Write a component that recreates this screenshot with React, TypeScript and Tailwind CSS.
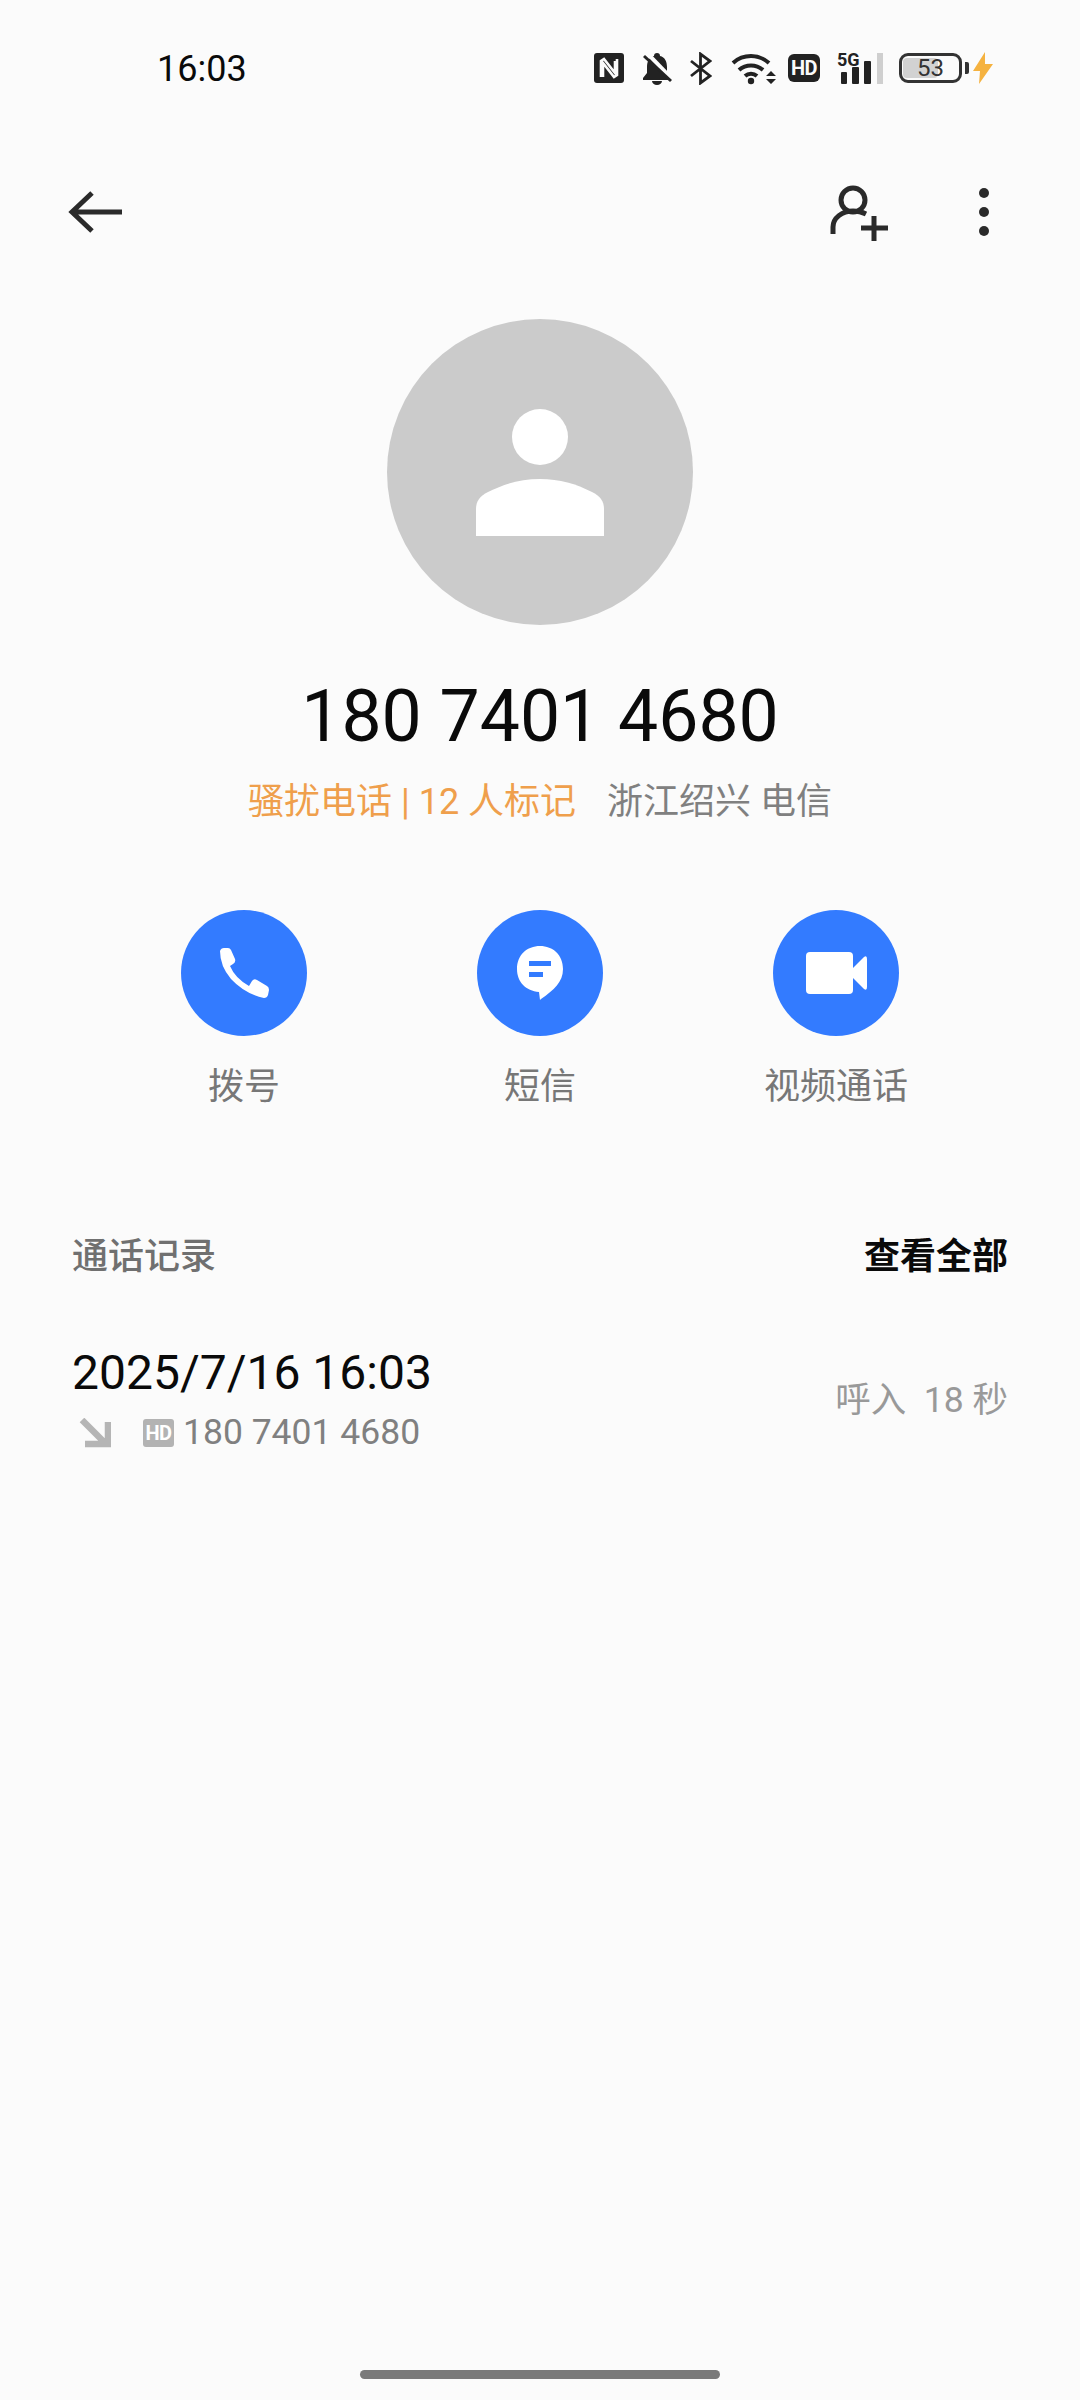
const fontStack = "font-['Roboto','Noto_Sans_CJK_SC',sans-serif]";

function StatusIcons() {
  return (
    <div className="flex items-center">
      {/* nfc */}
      <svg width="30" height="32" viewBox="0 0 30 32">
        <rect x="0" y="1" width="30" height="30" rx="3" fill="#222" />
        <path d="M7 25V9l3-2 11 14V9M23 7v16l-3 2L9 11v14" fill="none" stroke="#fbfbfb" strokeWidth="2.600" />
      </svg>
      {/* muted bell */}
      <svg className="ml-[18px]" width="30" height="33" viewBox="0 0 30 33">
        <path d="M15 1a3 3 0 0 1 3 3c5 1 7 6 7 11v6l4 5v2H1v-2l4-5v-6c0-5 2-10 7-11a3 3 0 0 1 3-3z" fill="#222" />
        <path d="M10 29h10a5 4 0 0 1-10 0z" fill="#222" />
        <path d="M5 1l26 27" stroke="#fbfbfb" strokeWidth="4" />
        <path d="M2 4l27 25" stroke="#222" strokeWidth="3" />
      </svg>
      {/* bluetooth */}
      <svg className="ml-[18px]" width="22" height="33" viewBox="0 0 22 33">
        <path d="M1 9l19 15-9.500 7V2L20 9 1 24" fill="none" stroke="#222" strokeWidth="2.800" />
      </svg>
      {/* wifi */}
      <svg className="ml-[19px]" width="45" height="33" viewBox="0 0 45 33">
        <path d="M2 11a27 27 0 0 1 36 0" fill="none" stroke="#222" strokeWidth="4" />
        <path d="M8 18a18 18 0 0 1 24 0" fill="none" stroke="#222" strokeWidth="4" />
        <path d="M14 24a9 9 0 0 1 12 0" fill="none" stroke="#222" strokeWidth="4" />
        <circle cx="20" cy="29" r="3.200" fill="#222" />
        <path d="M35 24l5-5 5 5zM35 27h10l-5 5z" fill="#222" />
      </svg>
      <div className="ml-[12px] flex h-[28px] w-[32px] items-center justify-center rounded-[6px] bg-[#222] font-['Roboto',sans-serif] text-[20px] font-bold tracking-[-0.5px] text-[#fbfbfb]">
        HD
      </div>
      {/* 5g + signal */}
      <svg className="ml-[17px] overflow-visible" width="46" height="33" viewBox="0 0 46 33">
        <text x="0" y="14" fontFamily="Roboto" fontSize="18" fontWeight="700" fill="#222">
          5G
        </text>
        <rect x="4" y="20" width="6" height="12" rx="1" fill="#222" />
        <rect x="15" y="15" width="7" height="17" rx="1" fill="#222" />
        <rect x="27" y="9" width="7" height="23" rx="1" fill="#222" />
        <rect x="40" y="1" width="6" height="31" fill="#cfcfcf" />
      </svg>
      {/* battery */}
      <div className="relative ml-[16px] flex h-[30px] w-[63px] items-center justify-center rounded-[9px] border-[3px] border-[#333] font-['Roboto',sans-serif] text-[24px] text-[#333]">
        <span className="absolute top-[2px] bottom-[2px] left-[1px] w-[35px] rounded-[4px] bg-[#d2d2d2]" />
        <span className="relative leading-none">53</span>
      </div>
      <div className="ml-[3px] h-[12px] w-[4px] rounded-r-[2px] bg-[#333]" />
      <svg className="ml-[4px]" width="20" height="32" viewBox="0 0 20 32">
        <path d="M12 0L0 19h7l-1 13 14-20h-8z" fill="#f5b240" />
      </svg>
    </div>
  );
}

function PhoneIcon() {
  return (
    <svg width="52" height="50" viewBox="0 0 52 50">
      <path
        d="M2 3 Q3 0 6 0 L10 0 Q12 0 13 2 L17 11 Q18 14 15 16 L12 18 Q17 30 31 38 L34 33 Q36 30 39 32 L49 38 Q51 39 51 42 L50 47 Q49 50 46 50 Q27 46 13 31 Q2 18 2 3 Z"
        fill="#fff"
      />
    </svg>
  );
}

function MessageIcon() {
  return (
    <svg width="46" height="54" viewBox="0 0 46 54">
      <path d="M23 0C36 0 46 9 46 23C46 36 37 44 24 53L23 54L22 46C9 45 0 36 0 23C0 9 10 0 23 0Z" fill="#fff" />
      <rect x="12" y="15" width="22" height="5" fill="#337bff" />
      <rect x="12" y="26" width="14" height="5" fill="#337bff" />
    </svg>
  );
}

function VideoIcon() {
  return (
    <svg width="61" height="42" viewBox="0 0 61 42">
      <rect x="0" y="0" width="47" height="42" rx="4" fill="#fff" />
      <path d="M47 16L58 5Q61 3 61 7V35Q61 39 58 37L47 26Z" fill="#fff" />
    </svg>
  );
}

const actions = [
  { label: "拨号", icon: <PhoneIcon /> },
  { label: "短信", icon: <MessageIcon /> },
  { label: "视频通话", icon: <VideoIcon /> },
];

export default function App() {
  return (
    <div className={`flex h-[2400px] w-[1080px] flex-col bg-[#fbfbfb] ${fontStack}`}>
      <div className="flex h-[136px] items-center justify-between pr-[87px] pl-[157px]">
        <span className="pt-[2px] text-[36px] leading-none font-[450] text-[#0a0a0a]">16:03</span>
        <StatusIcons />
      </div>

      <div className="mt-[26px] flex h-[100px] items-center justify-between pr-[91px] pl-[68px]">
        <svg width="56" height="44" viewBox="0 0 56 44">
          <path d="M24 3L4 22L24 41M4 22H54" fill="none" stroke="#2a2a2a" strokeWidth="5" />
        </svg>
        <div className="flex items-center">
          <svg width="62" height="58" viewBox="0 0 62 58">
            <circle cx="23" cy="17" r="12" fill="none" stroke="#2a2a2a" strokeWidth="5" />
            <path d="M3 51V44C3 35 12 28 23 28C28 28 32 29 36 31" fill="none" stroke="#2a2a2a" strokeWidth="5" />
            <path d="M44 33V58M31 45H58" fill="none" stroke="#2a2a2a" strokeWidth="5" />
          </svg>
          <svg className="ml-[87px]" width="10" height="48" viewBox="0 0 10 48">
            <circle cx="5" cy="5" r="5" fill="#2a2a2a" />
            <circle cx="5" cy="24" r="5" fill="#2a2a2a" />
            <circle cx="5" cy="43" r="5" fill="#2a2a2a" />
          </svg>
        </div>
      </div>

      <div className="mt-[57px] flex flex-col items-center">
        <div className="flex h-[306px] w-[306px] flex-col items-center justify-center rounded-full bg-[#cbcbcb]">
          <div className="h-[56px] w-[56px] rounded-full bg-white" />
          <svg className="mt-[14px]" width="128" height="57" viewBox="0 0 128 57">
            <path d="M0 57V30C0 22 4 17 12 13C28 5 44 0 64 0C84 0 100 5 116 13C124 17 128 22 128 30V57Z" fill="#fff" />
          </svg>
        </div>
        <div className="mt-[50px] text-[71.5px] leading-[84px] text-[#0a0a0a]">180 7401 4680</div>
        <div className="mt-[18px] flex text-[36px] leading-[50px]">
          <span className="text-[#ef9f4c]">骚扰电话 | 12 人标记</span>
          <span className="ml-[31px] text-[#808080]">浙江绍兴 电信</span>
        </div>
      </div>

      <div className="mt-[83px] grid grid-cols-[repeat(3,296px)] pl-[96px]">
        {actions.map((action) => (
          <div key={action.label} className="flex flex-col items-center">
            <div className="flex h-[126px] w-[126px] items-center justify-center rounded-full bg-[#337bff]">
              {action.icon}
            </div>
            <span className="mt-[26px] text-[36px] leading-[50px] text-[#777]">{action.label}</span>
          </div>
        ))}
      </div>

      <div className="mt-[120px] flex items-center justify-between px-[72px] text-[36px] leading-[50px]">
        <span className="font-medium text-[#707070]">通话记录</span>
        <span className="font-bold text-[#0a0a0a]">查看全部</span>
      </div>

      <div className="mt-[61px] flex items-center justify-between px-[72px]">
        <div className="flex flex-col">
          <span className="text-[48px] leading-[60px] text-[#0a0a0a]">2025/7/16 16:03</span>
          <div className="mt-[8px] flex h-[44px] items-center">
            <svg className="ml-[7px]" width="32" height="30" viewBox="0 0 32 30">
              <path d="M3 2L27 26M29 4V26H6" fill="none" stroke="#b5b5b5" strokeWidth="6.500" />
            </svg>
            <div className="ml-[32px] flex h-[28px] w-[31px] items-center justify-center rounded-[3px] bg-[#b3b3b3] text-[20px] font-bold tracking-[-0.5px] text-white">
              HD
            </div>
            <span className="ml-[9px] text-[35.5px] text-[#808080]">180 7401 4680</span>
          </div>
        </div>
        <span className="mt-[4px] text-[35.5px] text-[#999] whitespace-pre">呼入  18 秒</span>
      </div>

      <div className="mt-auto mb-[21px] h-[9px] w-[360px] self-center rounded-full bg-[#7a7a7a]" />
    </div>
  );
}
